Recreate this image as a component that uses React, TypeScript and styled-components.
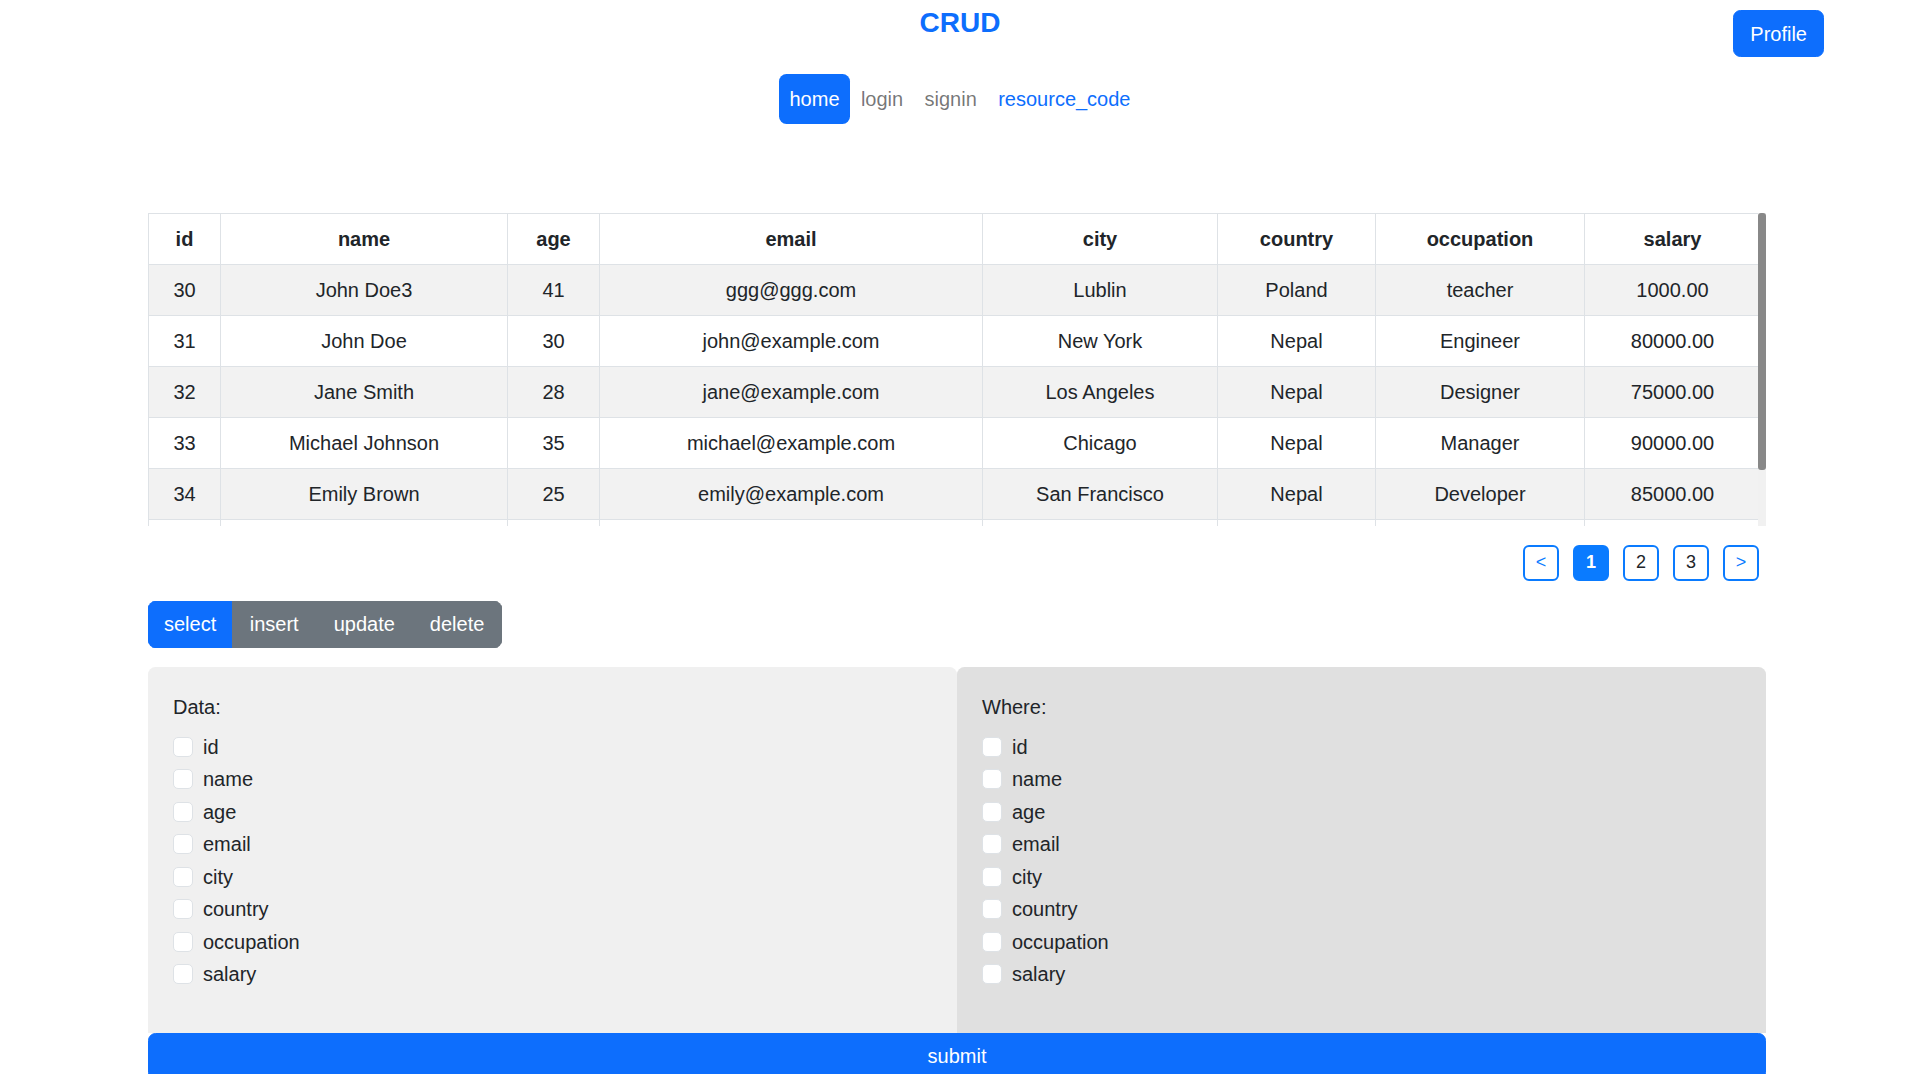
import React from "react";
import styled, { createGlobalStyle } from "styled-components";

const GlobalStyle = createGlobalStyle`
  * { box-sizing: border-box; }
  html, body { margin: 0; padding: 0; background: #ffffff; }
  body {
    font-family: "Liberation Sans", Arial, sans-serif;
    color: #212529;
    font-size: 20px;
    line-height: 30px;
  }
`;

const BLUE = "#0d6efd";

const Page = styled.div`
  width: 100%;
  padding-bottom: 40px;
`;

const Header = styled.header`
  display: grid;
  grid-template-columns: 1fr auto 1fr;
  align-items: start;
  padding-left: 8px;
`;

const Title = styled.h1`
  grid-column: 2;
  margin: 5px 0 0;
  font-size: 28px;
  line-height: 36px;
  font-weight: 700;
  color: ${BLUE};
`;

const ProfileButton = styled.button`
  grid-column: 3;
  justify-self: end;
  margin: 10px 88px 0 0;
  height: 47px;
  padding: 7.5px 16px;
  font-family: inherit;
  font-size: 20px;
  line-height: 30px;
  color: #ffffff;
  background: ${BLUE};
  border: 1px solid ${BLUE};
  border-radius: 7.5px;
`;

const Nav = styled.nav`
  display: flex;
  justify-content: center;
  margin-top: 17px;
  padding-left: 8px;
`;

const NavLink = styled.a<{ $variant: "active" | "muted" | "link" }>`
  display: block;
  padding: 10px 10.7px;
  font-size: 20px;
  line-height: 30px;
  border-radius: 7.5px;
  text-decoration: none;
  cursor: pointer;
  color: ${(p) =>
    p.$variant === "active" ? "#ffffff" : p.$variant === "link" ? BLUE : "rgba(0,0,0,0.55)"};
  background: ${(p) => (p.$variant === "active" ? BLUE : "transparent")};
`;

const Container = styled.main`
  width: 1620px;
  margin: 0 auto;
  padding-left: 2px;
`;

const TableFrame = styled.div`
  display: flex;
  margin-top: 89px;
  height: 312.5px;
`;

const TableViewport = styled.div`
  flex: 1;
  min-width: 0;
  overflow: hidden;
`;

const ScrollTrack = styled.div`
  flex: none;
  width: 8px;
  background: #f1f1f1;
  display: flex;
  flex-direction: column;
`;

const ScrollThumb = styled.div`
  height: 257px;
  background: #888888;
  border-radius: 3px;
`;

const Table = styled.table`
  width: 100%;
  table-layout: fixed;
  border-collapse: collapse;
  margin-bottom: 20px;
  font-size: 20px;
`;

const Th = styled.th`
  padding: 10px;
  line-height: 30px;
  font-weight: 700;
  text-align: center;
  border: 1px solid #dee2e6;
  background: #ffffff;
  color: #212529;
`;

const Tr = styled.tr<{ $striped: boolean }>`
  background: ${(p) => (p.$striped ? "#f2f2f2" : "#ffffff")};
`;

const Td = styled.td`
  padding: 10px;
  line-height: 30px;
  text-align: center;
  border: 1px solid #dee2e6;
  color: #212529;
  white-space: nowrap;
  overflow: hidden;
`;

const Pagination = styled.div`
  display: flex;
  justify-content: flex-end;
  gap: 14px;
  margin-top: 19px;
  padding-right: 7px;
`;

const PageButton = styled.button<{ $active?: boolean; $arrow?: boolean }>`
  width: 36px;
  height: 36px;
  padding: 0;
  display: flex;
  align-items: center;
  justify-content: center;
  font-family: inherit;
  font-size: 18px;
  font-weight: ${(p) => (p.$active ? 700 : 400)};
  border: 2px solid #0a7bff;
  border-radius: 6px;
  background: ${(p) => (p.$active ? "#0a7bff" : "#ffffff")};
  color: ${(p) => (p.$active ? "#ffffff" : p.$arrow ? "#0a7bff" : "#212529")};
`;

const OpGroup = styled.div`
  display: inline-flex;
  margin-top: 20px;
  border-radius: 7.5px;
  overflow: hidden;
`;

const OpButton = styled.button<{ $active?: boolean }>`
  padding: 7.5px ${(p) => (p.$active ? "15px" : "16.5px")};
  font-family: inherit;
  font-size: 20px;
  line-height: 30px;
  color: #ffffff;
  border: 1px solid ${(p) => (p.$active ? BLUE : "#6c757d")};
  background: ${(p) => (p.$active ? BLUE : "#6c757d")};
`;

const Panels = styled.div`
  display: grid;
  grid-template-columns: 1fr 1fr;
  margin-top: 19px;
`;

const Panel = styled.section<{ $tone: "light" | "dark" }>`
  background: ${(p) => (p.$tone === "light" ? "#f0f0f0" : "#e0e0e0")};
  padding: 25px 25px 41px;
  border-radius: 7.5px 7.5px 0 0;
`;

const PanelLabel = styled.div`
  font-size: 20px;
  line-height: 30px;
  margin-bottom: 10px;
`;

const CheckRow = styled.label`
  display: flex;
  align-items: flex-start;
  gap: 10px;
  min-height: 30px;
  margin-bottom: 2.5px;
  font-size: 20px;
  line-height: 30px;
`;

const CheckBox = styled.input`
  appearance: none;
  -webkit-appearance: none;
  width: 20px;
  height: 20px;
  margin: 5px 0 0;
  background: #ffffff;
  border: 1px solid #dee2e6;
  border-radius: 5px;
  flex: none;
`;

const SubmitButton = styled.button`
  display: block;
  width: 100%;
  padding: 7.5px 15px;
  font-family: inherit;
  font-size: 20px;
  line-height: 30px;
  color: #ffffff;
  background: ${BLUE};
  border: 1px solid ${BLUE};
  border-radius: 7.5px;
`;

const columns = ["id", "name", "age", "email", "city", "country", "occupation", "salary"];
const widths = [72, 287, 92, 383, 235, 158, 209, 176];

const rows = [
  ["30", "John Doe3", "41", "ggg@ggg.com", "Lublin", "Poland", "teacher", "1000.00"],
  ["31", "John Doe", "30", "john@example.com", "New York", "Nepal", "Engineer", "80000.00"],
  ["32", "Jane Smith", "28", "jane@example.com", "Los Angeles", "Nepal", "Designer", "75000.00"],
  ["33", "Michael Johnson", "35", "michael@example.com", "Chicago", "Nepal", "Manager", "90000.00"],
  ["34", "Emily Brown", "25", "emily@example.com", "San Francisco", "Nepal", "Developer", "85000.00"],
  ["", "", "", "", "", "", "", ""],
];

function FieldPanel({ title, tone }: { title: string; tone: "light" | "dark" }) {
  return (
    <Panel $tone={tone}>
      <PanelLabel>{title}</PanelLabel>
      {columns.map((c) => (
        <CheckRow key={c}>
          <CheckBox type="checkbox" />
          <span>{c}</span>
        </CheckRow>
      ))}
    </Panel>
  );
}

export default function App() {
  return (
    <Page>
      <GlobalStyle />
      <Header>
        <Title>CRUD</Title>
        <ProfileButton>Profile</ProfileButton>
      </Header>
      <Nav>
        <NavLink $variant="active">home</NavLink>
        <NavLink $variant="muted">login</NavLink>
        <NavLink $variant="muted">signin</NavLink>
        <NavLink $variant="link">resource_code</NavLink>
      </Nav>
      <Container>
        <TableFrame>
          <TableViewport>
            <Table>
              <colgroup>
                {widths.map((w, i) => (
                  <col key={i} style={{ width: w }} />
                ))}
              </colgroup>
              <thead>
                <tr>
                  {columns.map((c) => (
                    <Th key={c}>{c}</Th>
                  ))}
                </tr>
              </thead>
              <tbody>
                {rows.map((r, i) => (
                  <Tr key={i} $striped={i % 2 === 0}>
                    {r.map((v, j) => (
                      <Td key={j}>{v || "\u00a0"}</Td>
                    ))}
                  </Tr>
                ))}
              </tbody>
            </Table>
          </TableViewport>
          <ScrollTrack>
            <ScrollThumb />
          </ScrollTrack>
        </TableFrame>
        <Pagination>
          <PageButton $arrow>&lt;</PageButton>
          <PageButton $active>1</PageButton>
          <PageButton>2</PageButton>
          <PageButton>3</PageButton>
          <PageButton $arrow>&gt;</PageButton>
        </Pagination>
        <OpGroup>
          <OpButton $active>select</OpButton>
          <OpButton>insert</OpButton>
          <OpButton>update</OpButton>
          <OpButton>delete</OpButton>
        </OpGroup>
        <Panels>
          <FieldPanel title="Data:" tone="light" />
          <FieldPanel title="Where:" tone="dark" />
        </Panels>
        <SubmitButton>submit</SubmitButton>
      </Container>
    </Page>
  );
}
